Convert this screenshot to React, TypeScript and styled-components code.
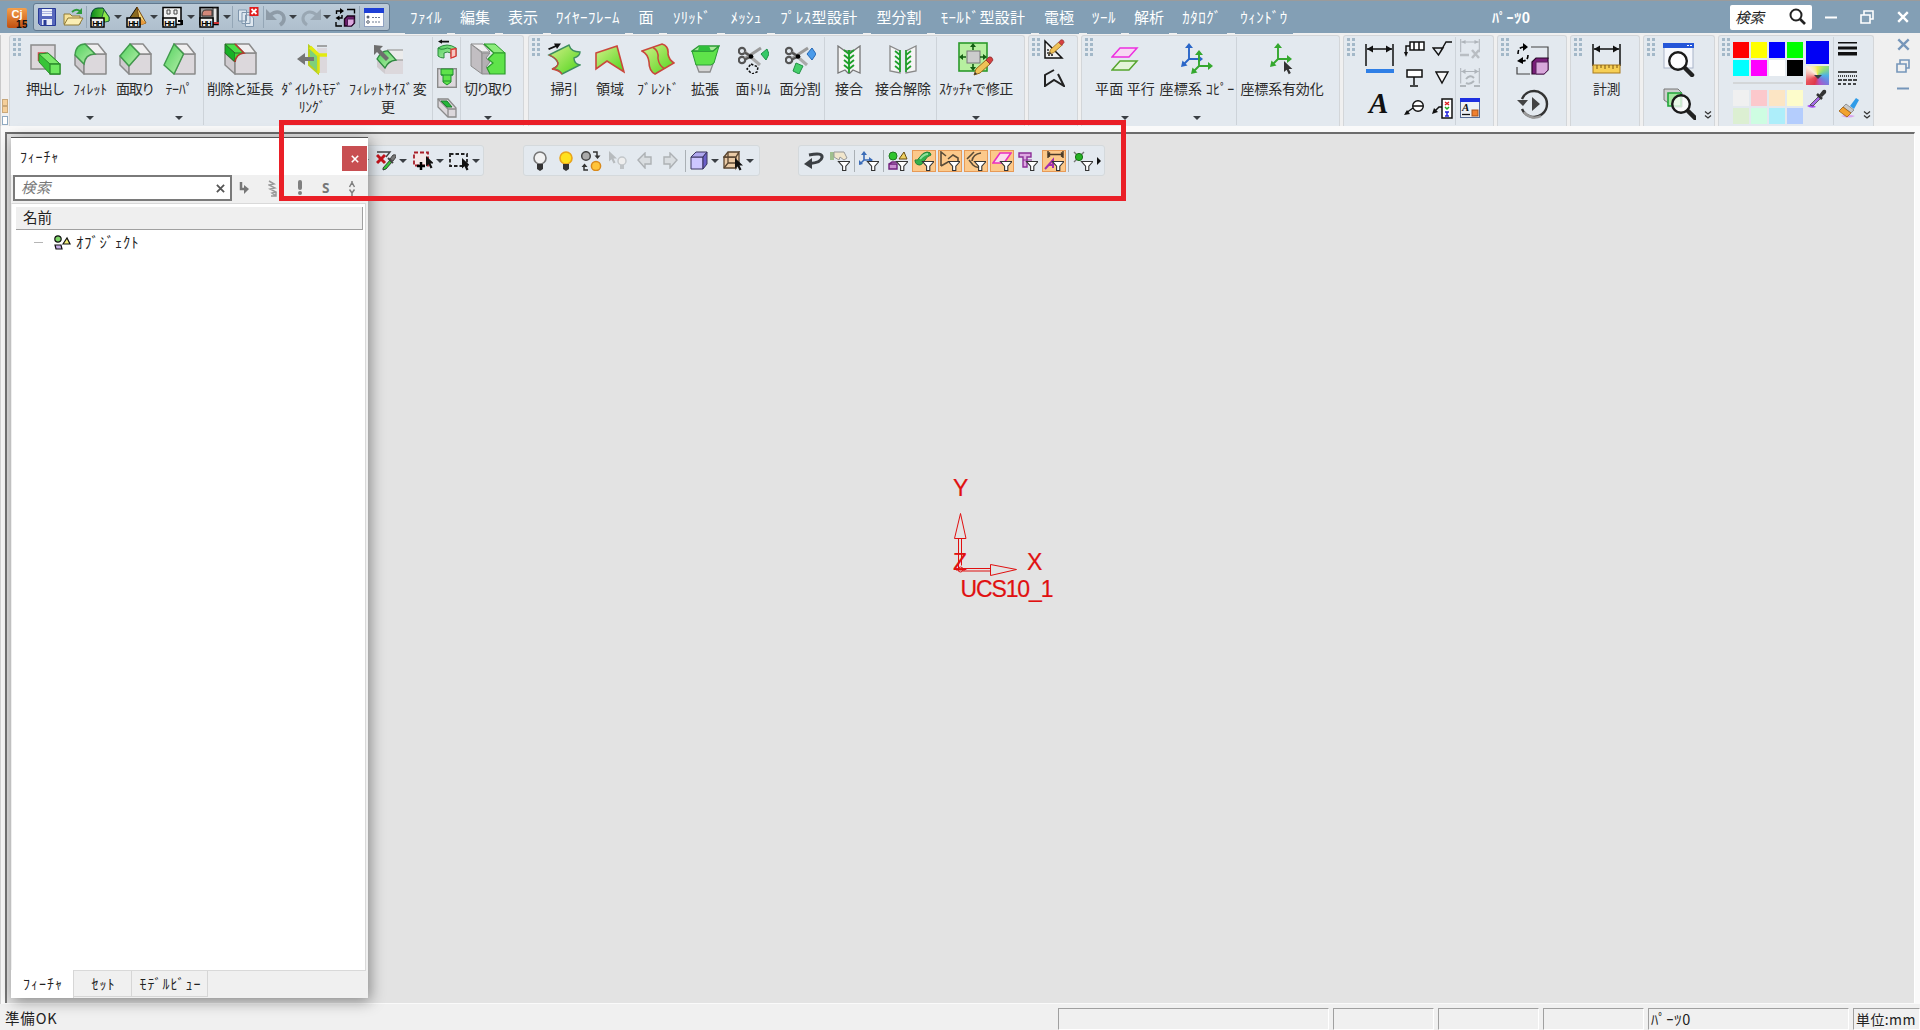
import React from "react";
import styled, { createGlobalStyle, css } from "styled-components";

const JP = `"Noto Sans CJK JP", "Noto Sans", sans-serif`;

const GlobalStyle = createGlobalStyle`
  html, body { margin: 0; padding: 0; overflow: hidden; }
  body { font-family: ${JP}; color: #222; background: #f0f0f0; }
  * { box-sizing: border-box; }
  svg { display: block; flex: none; }
`;

/* ---------- text fitted to the narrow UI font ---------- */

const advance = (ch: string) => {
  const c = ch.charCodeAt(0);
  if (c === 32) return 0.22;
  if (c < 128) return 0.57;
  if (c >= 0xff61 && c <= 0xff9f) return 0.5;
  return 1;
};

const tracking = (text: string, size: number, width: number) => {
  const chars = [...text];
  const natural = chars.reduce((sum, ch) => sum + advance(ch) * size, 0);
  return (width - natural) / chars.length;
};

const Fitted = styled.span<{ $size: number; $track: number; $italic?: boolean; $bold?: boolean }>`
  font-size: ${(p) => p.$size}px;
  letter-spacing: ${(p) => p.$track.toFixed(2)}px;
  font-style: ${(p) => (p.$italic ? "italic" : "normal")};
  font-weight: ${(p) => (p.$bold ? 700 : 400)};
  white-space: pre;
`;

type TextProps = { t: string; w: number; size?: number; italic?: boolean; bold?: boolean };
const Text = ({ t, w, size = 14, italic, bold }: TextProps) => (
  <Fitted $size={size} $track={tracking(t, size, w)} $italic={italic} $bold={bold}>
    {t}
  </Fitted>
);

/* ---------- icons ---------- */

const GREEN = "#5fe34a";
const GREY = "#dcd8dc";
const LINE = "#8b8b8b";

const HiddenSvg = styled.svg`
  position: absolute;
`;
const Defs = () => (
  <HiddenSvg width="0" height="0">
    <defs>
      <linearGradient id="lime" x1="0" y1="0" x2="1" y2="1">
        <stop offset="0" stopColor="#d6f08a" />
        <stop offset="1" stopColor="#4fd51c" />
      </linearGradient>
      <linearGradient id="mint" x1="0" y1="0" x2="1" y2="1">
        <stop offset="0" stopColor="#4fd05c" />
        <stop offset="1" stopColor="#b9efac" />
      </linearGradient>
      <linearGradient id="logo" x1="0" y1="0" x2="0" y2="1">
        <stop offset="0" stopColor="#f5a04c" />
        <stop offset="1" stopColor="#c04f10" />
      </linearGradient>
      <linearGradient id="cone" x1="0" y1="0" x2="1" y2="0">
        <stop offset="0" stopColor="#0c8a1c" />
        <stop offset="1" stopColor="#7be03c" />
      </linearGradient>
    </defs>
  </HiddenSvg>
);

const Funnel = () => (
  <path d="M8.5 10.5h11.5l-4.2 4.6v4.4h-3.2v-4.4z" fill="#fff" stroke="#333" strokeWidth="1.1" />
);
const Cursor = ({ x, y, fill = "#111" }: { x: number; y: number; fill?: string }) => (
  <path transform={`translate(${x} ${y})`} d="M0 0v10.5l2.5-2.2 2 4.2 2-1-2-4h3.5z" fill={fill} />
);
const Hex = () => (
  <g>
    <rect x="1" y="12" width="13" height="9" fill="#eee" stroke="#000" strokeWidth="1.5" />
    <text x="2.2" y="19.7" fontFamily="Liberation Sans" fontWeight="700" fontSize="8" textLength="10.5" fill="#000">
      HH
    </text>
  </g>
);
/* A block seen from the upper left; `left` and `front` are cut by the coloured face. */
const Solid = ({ left, front, top = "M11 1h13l8 10H21z" }: { left?: string; front: string; top?: string }) => (
  <g fill={GREY} stroke={LINE} strokeWidth="1.5" strokeLinejoin="round">
    {left && <path d={left} fill="#cfcbcf" />}
    <path d={front} />
    <path d={top} fill="#f0eff0" />
  </g>
);
const Dim = ({ c = "#111" }: { c?: string }) => (
  <g stroke={c} strokeWidth="1.5" fill={c}>
    <path d="M1 0v22M28 0v22M2 5h25" fill="none" />
    <path d="M2 5l6-3.5v7zM27 5l-6-3.5v7z" stroke="none" />
  </g>
);
const Axes = ({ x, y, c }: { x: number; y: number; c: string }) => (
  <g transform={`translate(${x} ${y})`} stroke={c} fill={c} strokeWidth="1.9">
    <path d="M8 3v12h9M8 15l-5 5" fill="none" />
    <path d="M8-1l4 5h-8zM22 15l-5 4v-8zM0 23l1.5-6.5 5 5z" stroke="none" />
  </g>
);
const Scissors = () => (
  <g fill="none" stroke="#555" strokeWidth="2.2">
    <circle cx="4" cy="7" r="3.2" />
    <circle cx="4" cy="16" r="3.2" />
    <path d="M7 14.5L23 4" stroke="#999" strokeWidth="3" />
    <path d="M7 8l15 13" stroke="#aaa" strokeWidth="3" />
    <path d="M6.5 8.5l7 4-6.5 3" />
    <circle cx="13" cy="12.5" r="1.2" fill="#000" stroke="#000" />
  </g>
);
const Lens = ({ x, y }: { x: number; y: number }) => (
  <g transform={`translate(${x} ${y})`}>
    <path d="M17 17l7 7" stroke="#222" strokeWidth="4.5" strokeLinecap="round" />
    <circle cx="10" cy="10" r="8.8" fill="#fff" fillOpacity="0.75" stroke="#1a1a1a" strokeWidth="2.4" />
  </g>
);
const Cycle = () => (
  <g fill="none" stroke="#000" strokeWidth="1.6">
    <path d="M2 12c0-5 2-7 7-7M12 13c0 4-2 6-6 6" strokeDasharray="4 2" />
    <path d="M7 1l5 4-5 4zM7 15v7l-6-3z" fill="#000" stroke="none" />
    <path d="M15 5h17v12M1 25v7h13" stroke="#444" strokeWidth="1.2" />
    <path d="M16 20l4-4h12v12l-4 4h-12z" fill="#7a1f7a" stroke="#2a0a2a" strokeWidth="1.2" />
    <path d="M20 20h12v8l-4 4h-8z" fill="#d9a8dc" stroke="#5a245e" strokeWidth="1" />
  </g>
);
const Pencil = ({ x, y, s = 1 }: { x: number; y: number; s?: number }) => (
  <g transform={`translate(${x} ${y}) scale(${s})`}>
    <path d="M0 19l2-6 10-9 4 4-10 9z" fill="#f0c257" stroke="#9a6c1c" strokeWidth="1" />
    <path d="M12 4l3-3q3-1 4 3l-3 4z" fill="#d84040" stroke="#8b3030" strokeWidth="0.8" />
    <path d="M0 19l1-3 2 2z" fill="#333" />
  </g>
);

type Glyph = { w: number; h: number; art: React.ReactNode };

const glyphs: Record<string, Glyph> = {
  logo: { w: 21, h: 21, art: (
    <g>
      <rect x="0" y="0" width="20" height="20" rx="2" fill="url(#logo)" />
      <text x="4.5" y="10" fontFamily="Liberation Sans" fontWeight="700" fontSize="11" fill="#fff">Cj</text>
      <text x="9" y="19.5" fontFamily="Liberation Sans" fontWeight="700" fontSize="10" textLength="11.500" fill="#111">15</text>
    </g>
  ) },
  save: { w: 18, h: 18, art: (
    <g>
      <path d="M.5 .5h17v17h-15l-2-2z" fill="#5868bd" stroke="#283a96" />
      <rect x="4" y="1" width="10" height="7" fill="#eef1fb" />
      <path d="M4 3.5h10M4 5.5h10" stroke="#9aa5d8" strokeWidth=".8" />
      <rect x="4" y="11" width="10" height="6" fill="#e7ebf8" />
      <rect x="5.5" y="12" width="3" height="5" fill="#283a96" />
    </g>
  ) },
  open: { w: 21, h: 18, art: (
    <g>
      <path d="M1 16V6h6l2 2h8v8z" fill="#f6e29a" stroke="#8f7a36" />
      <path d="M1 17l4-7h15l-4 7z" fill="#fbeeb4" stroke="#8f7a36" />
      <path d="M9 4q4-4 8-1" fill="none" stroke="#2c9a3a" strokeWidth="1.8" />
      <path d="M19 0v6h-6z" fill="#2c9a3a" />
    </g>
  ) },
  hexGreen: { w: 21, h: 22, art: (
    <g>
      <path d="M1 10q1-8 7-8h5l6 9v4h-18z" fill="url(#cone)" stroke="#043" strokeWidth="1" />
      <path d="M12 11l2-7 5 7v4q-4 2-7 0z" fill="#8fe84a" stroke="#264" strokeWidth="1" />
      <Hex />
    </g>
  ) },
  hexYellow: { w: 21, h: 22, art: (
    <g>
      <path d="M3 13l8-12 3 12z" fill="#8a6a20" stroke="#000" strokeWidth=".9" />
      <path d="M11 1l9 16-6 2z" fill="#f5d878" stroke="#7c4b10" strokeWidth="1" />
      <path d="M14 12l6 5-5 2z" fill="#e79a3c" />
      <Hex />
    </g>
  ) },
  hexBoard: { w: 21, h: 22, art: (
    <g>
      <path d="M1 1.5h18v17h-18z" fill="#f1f1f1" stroke="#000" strokeWidth="1.5" />
      <path d="M5 4h3v4h-3zM12 4h3v4h-3z" fill="none" stroke="#444" />
      <path d="M16 15h4v4" fill="none" stroke="#000" strokeWidth="2" />
      <Hex />
    </g>
  ) },
  hexRed: { w: 21, h: 22, art: (
    <g>
      <path d="M1 1.5h18v17h-18z" fill="#a0a0a0" stroke="#000" strokeWidth="1.5" />
      <path d="M3 9q0-5 4-5h6v6h-10z" fill="#d4887a" stroke="#333" />
      <path d="M14 2h4v15h-4z" fill="#e5e5e5" stroke="#222" />
      <path d="M13 17h7" stroke="#c33" strokeWidth="2" />
      <Hex />
    </g>
  ) },
  copyX: { w: 21, h: 20, art: (
    <g stroke="#7f96ad" fill="#dfe8f0">
      <path d="M.5 3h8v11h-8zM4 5.500h8v11h-8zM7.500 8h5l3 3v8.500h-8z" />
      <rect x="11.500" y="0" width="9" height="9" fill="#e11b1b" stroke="none" />
      <path d="M13.500 2l5 5M18.500 2l-5 5" stroke="#fff" strokeWidth="1.800" />
    </g>
  ) },
  undo: { w: 21, h: 20, art: (
    <g><path d="M4 8q8-6 13 0 3 6-3 10" fill="none" stroke="#8e9ba7" strokeWidth="3.500" /><path d="M0 2v11h11z" fill="#8e9ba7" /></g>
  ) },
  redo: { w: 21, h: 20, art: (
    <g><path d="M17 8q-8-6-13 0-3 6 3 10" fill="none" stroke="#99a7b3" strokeWidth="3" /><path d="M21 2v11h-11z" fill="#99a7b3" /></g>
  ) },
  cycleSmall: { w: 21, h: 20, art: (
    <g fill="none" stroke="#000" strokeWidth="1.400">
      <path d="M1.500 7v-3h4M7 8v3h-3M12 2.500h7.500v4M1 15v4h6" />
      <path d="M5 1l4 3-4 3zM4.500 8.500v5l-4-2.500z" fill="#000" stroke="none" />
      <path d="M9.500 12l3-3h7v7l-3 3h-7z" fill="#6d1d6d" stroke="#1c061c" />
      <path d="M12.500 12h6.500v4l-3 3h-3.500z" fill="#dba8de" stroke="#4a1a4e" strokeWidth="1" />
    </g>
  ) },
  formWin: { w: 21, h: 19, art: (
    <g>
      <rect x=".500" y=".500" width="19" height="18" fill="#fff" stroke="#8fa1c0" />
      <rect x="0" y="0" width="20" height="5" fill="#1d3fd6" />
      <path d="M8 9.500h9M8 14h9" stroke="#6d7a90" strokeDasharray="2 1" />
      <circle cx="4" cy="9" r="1.500" fill="#5a6474" /><circle cx="4" cy="14" r="1.300" fill="none" stroke="#5a6474" />
    </g>
  ) },

  extrude: { w: 31, h: 31, art: (
    <g>
      <rect x="1" y="1" width="24" height="24" fill={GREY} stroke={LINE} strokeWidth="1.500" />
      <path d="M8.500 17v-8h8" fill="none" stroke="#d04545" strokeWidth="1.500" />
      <path d="M9 10l9-1 12 11v10h-10l-11-12z" fill="#37c437" stroke="#2d8d2d" />
      <path d="M9 10l9-1 12 11h-10z" fill="#7be96a" stroke="#2d8d2d" />
      <path d="M20 20h10v10h-10z" fill="#6fe860" stroke="#2d8d2d" strokeWidth="1.300" />
    </g>
  ) },
  fillet: { w: 33, h: 32, art: (
    <g>
      <Solid left="M1 12v10l9 9v-10z" front="M10 31v-9Q11 11 21 11h11v20z" />
      <path d="M1 12Q2 1 11 1l10 10Q11 11 10 21z" fill="url(#mint)" stroke="#3f9a4b" strokeWidth="1.400" />
    </g>
  ) },
  chamfer: { w: 33, h: 32, art: (
    <g>
      <Solid left="M1 13v9l9 9v-8z" front="M10 31v-8L20.500 11H32v20z" />
      <path d="M1 13L11 1l9.500 10L10 23z" fill="url(#mint)" stroke="#3f9a4b" strokeWidth="1.400" />
    </g>
  ) },
  draft: { w: 33, h: 32, art: (
    <g>
      <Solid front="M11 31l9.500-20H32v20z" />
      <path d="M11 1l9.500 10L11 31 1 22z" fill="url(#mint)" stroke="#3f9a4b" strokeWidth="1.400" />
    </g>
  ) },
  removeExtend: { w: 33, h: 32, art: (
    <g>
      <Solid left="M1 10v12l10 9V19z" front="M11 31V19q0-8 9-9h12v21z" top="M11 1h14l7 9H20z" />
      <path d="M1 1l10 9v9L1 10z" fill="#17b026" stroke="#286b28" />
      <path d="M11 10h9q-8 1-9 9z" fill="#3fdc3a" />
      <path d="M1 1h10l9 9h-9z" fill="#4ce04a" stroke="#286b28" />
      <path d="M11 1l9 9q-8 1-9 9" fill="none" stroke="#b03a2e" strokeWidth="1.700" />
    </g>
  ) },
  direct: { w: 31, h: 31, art: (
    <g>
      <path d="M20 4h10v25h-8z" fill={GREY} />
      <path d="M20 2h10" stroke={LINE} strokeWidth="1.500" />
      <path d="M12 2l9 8v19l-9-8z" fill="#7ed07a" stroke="#b9cf20" strokeWidth="2" />
      <path d="M13 3l8.500 8H30" fill="none" stroke="#e2ea10" strokeWidth="3.500" />
      <path d="M21.500 11v18" stroke="#d8e410" strokeWidth="2.500" />
      <path d="M0 15l8-6v4h9v4h-9v4z" fill="#757575" />
    </g>
  ) },
  filletSize: { w: 31, h: 31, art: (
    <g>
      <path d="M14 6h16v10l-12 2z" fill="#ececec" />
      <path d="M4 16v7l8 7V20z" fill="#cfcbcf" />
      <path d="M12 30v-6q3-9 10-8h8v14z" fill={GREY} />
      <path d="M14 6h16M22 16h8" stroke="#aaa" strokeWidth="1.400" />
      <path d="M4 15q5-9 11-8l8 9q-8 1-11 8z" fill="url(#mint)" stroke="#2e8740" strokeWidth="1.300" />
      <path d="M1 1l9 1-3 3 9 9-3 3-9-9-3 3z" fill="#6e6e6e" />
    </g>
  ) },
  cylCut: { w: 20, h: 21, art: (
    <g>
      <path d="M1 2.500l4-2v1.300h7v1.600h-7v1.300z" fill="#111" />
      <path d="M1 9q9-6 18 0v8q-3 2-5 1v-4q-4-2-7 0v5q-4 0-6-2z" fill="url(#mint)" stroke="#2b8a3d" />
      <path d="M1 9q3 2 6 1 3-2 7 0" fill="none" stroke="#2b8a3d" />
      <path d="M14 10.500l5-1v7.500l-5 2z" fill="#f5c7c0" stroke="#d33" strokeWidth="1.300" />
    </g>
  ) },
  holeCut: { w: 20, h: 20, art: (
    <g>
      <rect x=".7" y=".7" width="18.600" height="18.600" fill={GREY} stroke={LINE} strokeWidth="1.400" />
      <path d="M4 1h12v6h-2v7l-4 3-4-3v-7h-2z" fill={GREEN} stroke="#1e8e2e" />
      <path d="M4 7h12M6 13h8" stroke="#1e8e2e" />
    </g>
  ) },
  pocket: { w: 20, h: 20, art: (
    <g>
      <path d="M1 1h10l8 9v9h-8l-10-10z" fill={GREY} stroke={LINE} strokeWidth="1.300" />
      <path d="M1 1l10 10h8M11 11v8" fill="none" stroke={LINE} strokeWidth="1.300" />
      <path d="M4 3h6l5 6h-5z" fill="#25b63a" stroke="#1e7e2e" />
    </g>
  ) },
  cutOff: { w: 36, h: 32, art: (
    <g>
      <path d="M1 1l11 9v21L1 23z" fill="#c2bec2" stroke={LINE} />
      <path d="M1 1h12l7 8h-8z" fill="#f0eff0" stroke={LINE} />
      <path d="M12 10h8l-4 5 4 4-4 5 4 3v4h-8z" fill="#b3afb3" stroke={LINE} />
      <path d="M14 1h11l10 9H24z" fill="#8cec7c" stroke="#2b9a2b" />
      <path d="M14 1l10 9-6 6 5 4-6 5 3 6h15V10H24" fill={GREEN} stroke="#2b9a2b" strokeWidth="1.200" />
    </g>
  ) },
  sweep: { w: 34, h: 34, art: (
    <g>
      <path d="M2 13L22 3q2 7 11 7 0 4-6 6 0 6 6 7L15 32q-3-5-10-5 6-2 6-6-2-5-9-8z" fill="url(#lime)" stroke="#3f8f60" strokeWidth="1.400" />
      <path d="M2 13q8 3 9 8 0 4-6 6 7 1 10 5" fill="none" stroke="#c94a3e" strokeWidth="1.300" />
      <path d="M1 6.500l7-3-1-2 7 0-4 5.500-1-2-7 3z" fill="#111" />
    </g>
  ) },
  region: { w: 30, h: 30, art: <path d="M1 9L22 2l7 26-17-11L1 25z" fill="url(#lime)" stroke="#c9483c" strokeWidth="1.600" /> },
  blend: { w: 34, h: 32, art: (
    <g>
      <path d="M1 8L21 1q7 2 6 10 1 6 6 9L14 31Q8 28 8 19 7 11 1 8z" fill="url(#lime)" stroke="#c9483c" strokeWidth="1.600" />
      <path d="M12 4.500q6 3 5 11 1 7 6 10" fill="none" stroke="#c9483c" strokeWidth="1.500" />
    </g>
  ) },
  expand: { w: 29, h: 28, art: (
    <g>
      <path d="M5 19h17l-3 8h-11z" fill="#d5d5d5" stroke={LINE} strokeWidth="1.300" />
      <path d="M1 6h21l6-5-5 17-3 2h-15z" fill={GREEN} stroke="#2a9a35" />
      <path d="M1 6l7-5h20l-6 5z" fill="#a9e89a" stroke="#2a9a35" strokeWidth="1.300" />
      <path d="M8 1l-1 5h13l-2-5" fill="#2fbf3a" />
    </g>
  ) },
  faceTrim: { w: 31, h: 30, art: (
    <g>
      <Scissors />
      <path d="M23 10l6-5 2 5-3 6z" fill="#36c968" stroke="#1d9146" />
      <path d="M13 20l7 3-1 5-5 2-5-5z" fill="none" stroke="#111" strokeWidth="1.500" strokeDasharray="2.500 1.500" />
    </g>
  ) },
  faceSplit: { w: 31, h: 30, art: (
    <g>
      <Scissors />
      <path d="M22 10l5-6 4 6-4 6z" fill="#4a9bea" stroke="#2668b4" />
      <path d="M11 19l7 3-4 8-6-3z" fill="#45cf6a" stroke="#229144" />
    </g>
  ) },
  join: { w: 24, h: 29, art: (
    <g>
      <path d="M1 1l7 5h8l7-5v27l-7-3-4 4-4-4-7 3z" fill="#f4f4f4" stroke="#777" strokeWidth="1.300" />
      <g stroke="#1fa02a" strokeWidth="1.900" fill="none">
        <path d="M12 5v23M7 5l5 4 5-4M7 10l5 4 5-4M7 15l5 4 5-4M7 20l5 4 5-4" />
      </g>
    </g>
  ) },
  unjoin: { w: 28, h: 29, art: (
    <g>
      <path d="M1 1l10 5v22l-10-2zM27 1l-10 5v22l10-2z" fill="#f4f4f4" stroke="#888" strokeWidth="1.300" />
      <g stroke="#1fa02a" strokeWidth="1.700" fill="none">
        <path d="M11 5v22M17 5v22M6 6l5 4M6 11l5 4M6 16l5 4M6 21l5 4M22 6l-5 4M22 11l-5 4M22 16l-5 4M22 21l-5 4" />
      </g>
    </g>
  ) },
  sketchFix: { w: 36, h: 34, art: (
    <g>
      <rect x="1" y="1" width="28" height="28" fill="#b7efa0" stroke="#2b9a2b" strokeWidth="1.600" />
      <rect x="9" y="9" width="13" height="12" fill="#ccc" stroke="#777" />
      <path d="M15 1l3 4h-6zM15 29l3-4h-6zM1 15l4-3v6zM29 15l-4-3v6z" fill="#145e14" />
      <path d="M15 4v4M15 22v4M4 15h4M22 15h4" stroke="#145e14" strokeWidth="1.600" />
      <Pencil x={16} y={14} />
    </g>
  ) },
  sketch: { w: 21, h: 21, art: (
    <g>
      <path d="M1 2v17h17z" fill="#f0f0f0" stroke="#111" strokeWidth="1.500" />
      <path d="M4 10v6h6" fill="none" stroke="#111" strokeWidth="1.300" strokeDasharray="2 1" />
      <Pencil x={5} y={0} s={0.8} />
    </g>
  ) },
  profile: { w: 21, h: 18, art: <path d="M10 1L1 6v11l9-6 10 6-6-12" fill="none" stroke="#222" strokeWidth="2" /> },
  plane: { w: 28, h: 26, art: (
    <g strokeWidth="1.500">
      <path d="M9 2h17l-8 9h-17z" fill="#f7d8f3" stroke="#ec2fe0" />
      <path d="M9 15h17l-8 9h-17z" fill="#e4f5da" stroke="#56a52e" />
    </g>
  ) },
  ucsCopy: { w: 33, h: 32, art: <g><Axes x={0} y={1} c="#2a66c8" /><Axes x={10} y={8} c="#35a82e" /></g> },
  ucsActive: { w: 24, h: 32, art: <g><Axes x={0} y={1} c="#35a82e" /><g transform="translate(14 18) scale(1.050)"><Cursor x={0} y={0} fill="#333" /></g></g> },

  dimension: { w: 29, h: 30, art: <g><Dim /><rect x="1" y="25" width="28" height="4" fill="#2f7fe6" /></g> },
  textA: { w: 30, h: 28, art: <text x="5" y="24" fontFamily="Liberation Serif" fontStyle="italic" fontWeight="700" fontSize="29" fill="#111">A</text> },
  note1: { w: 21, h: 16, art: (
    <g fill="none" stroke="#111" strokeWidth="1.500"><rect x="6" y="1" width="14" height="8" fill="#fff" /><path d="M10 1v8M15 1v8M6 5h-4v8" /><path d="M2 16l-2-5h4z" fill="#111" stroke="none" /></g>
  ) },
  note2: { w: 17, h: 18, art: (
    <g fill="#fff" stroke="#111" strokeWidth="1.500"><rect x="1" y="1" width="15" height="7" /><path d="M8 8v8M4 17h8" /></g>
  ) },
  note3: { w: 21, h: 16, art: (
    <g fill="#fff" stroke="#111" strokeWidth="1.400"><circle cx="14" cy="6" r="5.300" /><path d="M9 6h10M9 8l-7 5" /><path d="M0 15l3-5 3 4z" fill="#111" stroke="none" /></g>
  ) },
  rough1: { w: 20, h: 16, art: <path d="M1 7h10l-4.500 7zM6.500 14L14 1h6" fill="none" stroke="#111" strokeWidth="1.400" /> },
  rough2: { w: 15, h: 14, art: <path d="M1 1h12l-6 11z" fill="#f6f6f6" stroke="#111" strokeWidth="1.400" /> },
  tolBox: { w: 21, h: 21, art: (
    <g fill="none" stroke="#111" strokeWidth="1.500">
      <rect x="10" y="1" width="10" height="19" fill="#fff" />
      <path d="M13 4l4 3M17 4l-4 3" stroke="#d22" /><path d="M13 9l2 2 2-2" stroke="#2a2" /><path d="M13 14h4M15 14v4M13 18h4" stroke="#22d" />
      <path d="M10 9h-3l-4 4" /><path d="M0 16l2-6 4 4z" fill="#111" stroke="none" />
    </g>
  ) },
  dimDel: { w: 21, h: 21, art: <g><g transform="scale(.690 .600)"><Dim c="#aeb4ba" /></g><path d="M0 16h9M12 11l7 8M19 11l-7 8" stroke="#b9bec3" strokeWidth="2.500" /></g> },
  dimRot: { w: 21, h: 21, art: <g><g transform="scale(.690 .700)"><Dim c="#aeb4ba" /></g><path d="M6 11q4-5 8-1M14 13q-4 4-8 2M0 18h6M14 18h6" stroke="#b0b6bb" strokeWidth="2" fill="none" /></g> },
  textWin: { w: 21, h: 20, art: (
    <g>
      <rect x=".500" y=".500" width="19" height="19" fill="#eef1f6" stroke="#566c96" />
      <rect x="0" y="0" width="20" height="4" fill="#1d2fe0" />
      <text x="2" y="13" fontFamily="Liberation Serif" fontStyle="italic" fontWeight="700" fontSize="11" fill="#111">A</text>
      <path d="M2 16.500h8" stroke="#111" strokeWidth="1.300" />
      <rect x="12" y="12" width="6" height="6" fill="#f08030" stroke="#a4521a" />
    </g>
  ) },
  cycle: { w: 34, h: 34, art: <Cycle /> },
  history: { w: 33, h: 31, art: (
    <g>
      <path d="M5 11A13 13 0 1 1 5 21" fill="none" stroke="#333" strokeWidth="2.400" />
      <path d="M7 24A13 13 0 0 0 24 28" fill="none" stroke="#999" strokeWidth="2.400" />
      <path d="M0 12h11l-5 6zM15 9l8 7-8 7z" fill="#444" />
    </g>
  ) },
  measure: { w: 29, h: 30, art: (
    <g><Dim /><rect x="1" y="21" width="27" height="8" fill="#f6cf55" stroke="#a87a1e" /><path d="M5 21v4M9 21v3M13 21v4M17 21v3M21 21v4M25 21v3" stroke="#7a5510" /></g>
  ) },
  zoomWin: { w: 32, h: 34, art: (
    <g><rect x="1" y="1" width="29" height="24" fill="#f6f8fd" stroke="#a9b4c8" /><rect x="0" y="0" width="31" height="5" fill="#2556d8" /><path d="M24 2.500h2M27 2.500h2" stroke="#fff" /><Lens x={5} y={8} /></g>
  ) },
  zoomPart: { w: 33, h: 32, art: (
    <g>
      <path d="M1 1h14l4 4v14h-8l-10-7z" fill="#cfcfcf" stroke="#777" />
      <path d="M5 5h13v13h-13z" fill="#a5e8a0" stroke="#21a53a" strokeWidth="1.600" />
      <Lens x={8} y={6} />
    </g>
  ) },
  dropper: { w: 22, h: 20, art: (
    <g>
      <path d="M1 17q5-3 9 1-5 2-9-1z" fill="#a34df0" />
      <path d="M4 16l9-9 2 2-8 8z" fill="#a66be8" stroke="#444" strokeWidth=".8" /><path d="M11 5l5 5" stroke="#333" strokeWidth="2.500" /><path d="M13 6l4-5q4-1 3 3l-4 4z" fill="#333" />
    </g>
  ) },
  thickness: { w: 20, h: 14, art: <g fill="#111"><rect y="0" width="19" height="1.500" /><rect y="4.500" width="19" height="3" /><rect y="10" width="19" height="3.500" /></g> },
  dashes: { w: 20, h: 15, art: (
    <g stroke="#111" strokeWidth="1.500"><path d="M0 1h19" /><path d="M0 5h19" strokeDasharray="1 1" /><path d="M0 9h19" strokeDasharray="4 1" /><path d="M0 13h19" strokeDasharray="3 2" /></g>
  ) },
  brush: { w: 21, h: 20, art: (
    <g>
      <path d="M3 18q6-3 14 0-6 3-14 0z" fill="#d9a6ee" />
      <path d="M12 8l6-8 3 2-5 9z" fill="#2f9be8" />
      <path d="M8 6l8 6-3 3-8-6z" fill="#c9c9c9" stroke="#777" strokeWidth=".700" />
      <path d="M5 9l8 6-4 4-8-6z" fill="#f2a22e" stroke="#9c5c12" strokeWidth=".800" />
    </g>
  ) },

  pickFilter: { w: 20, h: 20, art: (
    <g><path d="M1 1h13l-4 5" fill="none" stroke="#444" strokeWidth="1.400" /><path d="M1 4l8 8M9 4l-8 8" stroke="#c4141c" strokeWidth="3" /><path d="M7 17l7-8 2 2-6 7-3 1z" fill="#3ac83a" stroke="#222" strokeWidth=".8" /><path d="M12 7l5 5" stroke="#444" strokeWidth="2" /><path d="M14 8l3-4q4-1 3 2l-3 4z" fill="#777" stroke="#444" /></g>
  ) },
  addSelect: { w: 20, h: 20, art: (
    <g><rect x="1" y="1.500" width="14" height="13" fill="#f5e8e8" stroke="#a81e28" strokeWidth="1.800" strokeDasharray="4 2" /><path d="M8 11v8M4 15h8" stroke="#000" strokeWidth="2.500" /><Cursor x={13} y={5} /></g>
  ) },
  boxSelect: { w: 20, h: 20, art: <g><rect x="1" y="3" width="17" height="12" fill="none" stroke="#222" strokeWidth="1.800" strokeDasharray="3.500 2" /><Cursor x={13} y={7} /></g> },
  bulbOff: { w: 14, h: 20, art: <g><circle cx="7" cy="7" r="6" fill="#f2f2f2" stroke="#777" strokeWidth="1.600" /><path d="M4 13h6v5l-3 2-3-2z" fill="#333" /></g> },
  bulbOn: { w: 14, h: 20, art: <g><circle cx="7" cy="7" r="6" fill="#ffe11e" stroke="#e9a41c" strokeWidth="1.600" /><path d="M4 13h6v5l-3 2-3-2z" fill="#333" /></g> },
  swap: { w: 21, h: 20, art: (
    <g><circle cx="5" cy="5" r="4.300" fill="#aaa" stroke="#444" strokeWidth="1.500" /><circle cx="15" cy="15" r="4.600" fill="#ffc43a" stroke="#d98a1c" strokeWidth="1.500" /><path d="M12 1h4v4M7 19h-4v-4" fill="none" stroke="#333" strokeWidth="1.500" /><path d="M13.500 4.500h6l-3 3.500zM.5 16h6l-3-3.500z" fill="#333" /></g>
  ) },
  ghostBulb: { w: 19, h: 19, art: <g><Cursor x={0} y={0} fill="#b7bbbe" /><circle cx="13" cy="10" r="4" fill="#eee" stroke="#c3c7ca" strokeWidth="1.500" /><path d="M11 14h4v4h-4z" fill="#bfc3c6" /></g> },
  left: { w: 15, h: 17, art: <path d="M1 8l7-7v4h6v7h-6v4z" fill="#d9dde0" stroke="#adb1b4" strokeWidth="1.400" /> },
  right: { w: 15, h: 17, art: <path d="M14 8l-7-7v4h-6v7h6v4z" fill="#d9dde0" stroke="#adb1b4" strokeWidth="1.400" /> },
  cube: { w: 18, h: 19, art: (
    <g stroke="#3a3560" strokeWidth="1"><path d="M1 6h12v12h-12z" fill="#cdc6ff" /><path d="M1 6l5-5h11l-4 5z" fill="#b0a8ee" /><path d="M17 1v12l-4 5v-12z" fill="#6a5fc8" /></g>
  ) },
  wireCube: { w: 20, h: 20, art: (
    <g><g stroke="#5a4630" strokeWidth="1.300" fill="#eacba6"><path d="M1 6h12v11h-12z" /><path d="M1 6l4-5h11l-3 5zM16 1v11l-3 5v-11z" /><path d="M5 1v11h11M5 12l-4 5" fill="none" /></g><Cursor x={12} y={7} /></g>
  ) },
  loop: { w: 20, h: 17, art: <g><path d="M5 3q14-3 13 2.500-1 5-12 6" fill="none" stroke="#3c4044" strokeWidth="3" /><path d="M0 12l8-6v11z" fill="#3c4044" /></g> },
  fHand: { w: 20, h: 20, art: <g><path d="M0 1h4v8h-4z" fill="#9fc08e" /><path d="M4 1h10l3 6-3 2-4-3-1 3-5-3z" fill="#f1e6cc" stroke="#999" /><Funnel /></g> },
  fAxes: { w: 20, h: 20, art: <g><path d="M5 2v7h8M5 9l-4 4" fill="none" stroke="#3a6cb8" strokeWidth="1.600" /><path d="M5 0l3 4h-6zM14 9l-4 3v-6zM0 14v-5l4 4z" fill="#3a6cb8" /><Funnel /></g> },
  fObjects: { w: 20, h: 20, art: <g><circle cx="5" cy="5" r="4" fill="#2fc42f" stroke="#217a21" /><path d="M11 8l5-7 3 7z" fill="#efd060" stroke="#664c10" /><path d="M1 13h8v5h-8zM1 13l3-2h6" fill="#c98fd0" stroke="#701f7c" strokeWidth="1.400" /><Funnel /></g> },
  fFace: { w: 20, h: 20, art: <g><path d="M1 9q3 1 4-2 4-6 8-6 4 0 4 3-4 1-6 5-3 5-5 5-5 0-5-5z" fill="#33b04a" stroke="#1e8036" /><path d="M6 8q4-5 8-5" fill="none" stroke="#8fe09a" strokeWidth="2" /><Funnel /></g> },
  fProfile: { w: 20, h: 20, art: <g><path d="M1 15V1l5 4M1 15l7-4M8 8l5-4 5 3v3" fill="none" stroke="#5a4c38" strokeWidth="1.600" /><Funnel /></g> },
  fCurve: { w: 20, h: 20, art: <g><path d="M1 8L8 1M3 9l4 5q3 3 6 2M15 2Q7 3 6 10" fill="none" stroke="#5a4c38" strokeWidth="1.600" /><Funnel /></g> },
  fPlane: { w: 20, h: 20, art: <g><path d="M8 2h11l-7 10h-11z" fill="#fbdcec" stroke="#ea2fc0" strokeWidth="1.600" /><Funnel /></g> },
  fPart: { w: 20, h: 20, art: <g><path d="M1 2h12v4h-4v10h-4v-10h-4z" fill="#dda8e2" stroke="#8c2f98" strokeWidth="1.400" /><path d="M5 9h9" stroke="#8c2f98" /><Funnel /></g> },
  fDim: { w: 20, h: 20, art: <g><path d="M4 0v7M19 0v7M4 3.500h15M6 1.500l-2 2 2 2M17 1.500l2 2-2 2" fill="none" stroke="#4a3a28" strokeWidth="1.400" /><path d="M1 18l8-9v8M4 14h5" fill="none" stroke="#a22fae" strokeWidth="2" /><Funnel /></g> },
  fPoint: { w: 20, h: 20, art: <g><path d="M1 1l3 3M11 1l-3 3M1 11l3-3" stroke="#777" strokeWidth="1.400" /><circle cx="6" cy="6" r="3.600" fill="#25b325" stroke="#157015" /><Funnel /></g> },

  pArrow: { w: 10, h: 12, art: <g><path d="M2 0v7h4" fill="none" stroke="#777" strokeWidth="2.500" /><path d="M5 3l5 4-5 5z" fill="#777" /></g> },
  pSpring: { w: 9, h: 17, art: <path d="M1 1l5 3-5 1 6 3-5 1 6 3-4 1 4 3M8 12v4h-5" fill="none" stroke="#999" strokeWidth="1.500" /> },
  pBang: { w: 6, h: 16, art: <g fill="#808080"><rect x="1" y="0" width="4" height="10" rx="2" /><circle cx="3" cy="13" r="2" /></g> },
  pS: { w: 10, h: 14, art: <text x="1" y="12" fontFamily="Open Sans" fontWeight="700" fontSize="13.500" fill="#777">S</text> },
  pSort: { w: 8, h: 17, art: <path d="M4 1v4M1.500 7L4 2.500 6.500 7M4 16v-3M1.500 9.500L4 13l2.500-3.500" fill="none" stroke="#808080" strokeWidth="1.500" /> },
  objects: { w: 17, h: 15, art: <g stroke="#111" strokeWidth="1.200"><circle cx="4" cy="4" r="3.200" fill="#7fd66a" /><path d="M9 9l4-6 3 6z" fill="#f4f07a" /><path d="M1 10h6l1 4h-6z" fill="#c7aee8" /></g> },
};

const Icon = ({ n }: { n: string }) => {
  const g = glyphs[n];
  return (
    <svg width={g.w} height={g.h} viewBox={`0 0 ${g.w} ${g.h}`}>
      {g.art}
    </svg>
  );
};

const Caret = styled.span<{ $side?: boolean }>`
  flex: none;
  width: 0;
  height: 0;
  border: 4px solid transparent;
  ${(p) =>
    p.$side
      ? css`border-left: 4px solid #111; border-right: 0;`
      : css`border-top: 4px solid #3a3f44; border-bottom: 0;`}
`;

/* ---------- title bar ---------- */

const Window = styled.div`
  width: 1920px;
  height: 1030px;
  display: flex;
  flex-direction: column;
  background: #f0f0f0;
  position: relative;
  overflow: hidden;
`;
const TitleBar = styled.header`
  flex: none;
  height: 33px;
  background: #839fb5;
  border-top: 1px solid #9b9b9b;
  display: flex;
  align-items: flex-start;
  padding-left: 7px;
`;
const LogoSlot = styled.div`
  width: 26px;
  padding-top: 7px;
`;
const QuickBar = styled.div`
  width: 357px;
  height: 28px;
  margin-top: 2px;
  border: 1px solid #62798f;
  border-radius: 3px;
  background: linear-gradient(#bccbd8, #afbfcd);
  display: flex;
  align-items: center;
`;
const QuickSlot = styled.div<{ $w: number }>`
  flex: none;
  width: ${(p) => p.$w}px;
  display: flex;
  justify-content: center;
`;
const QuickSep = styled.i`
  flex: none;
  width: 1px;
  height: 22px;
  background: #94a6b6;
`;
const Menu = styled.nav`
  display: flex;
  gap: 8px;
  margin-left: 15px;
`;
const MenuItem = styled.div<{ $w: number }>`
  width: ${(p) => p.$w}px;
  height: 33px;
  padding-bottom: 1px;
  background: #839fb5;
  color: #fff;
  display: flex;
  align-items: center;
  justify-content: center;
  line-height: 20px;
`;
const DocTitle = styled.div`
  width: 238px;
  margin-left: 199px;
  color: #fff;
  line-height: 31px;
`;
const SearchBox = styled.div`
  width: 82px;
  height: 25px;
  margin-top: 4px;
  padding: 0 6px 2px 5px;
  background: #fff;
  border-radius: 2px;
  display: flex;
  align-items: center;
  justify-content: space-between;
  line-height: 20px;
`;
const WindowButtons = styled.div`
  height: 32px;
  margin-left: 13px;
  display: flex;
  align-items: center;
  gap: 23px;
`;

const quick: Array<[string, number] | "|" | "v"> = [
  ["save", 26], ["open", 26], "|", ["hexGreen", 26], "v", ["hexYellow", 26], "v", ["hexBoard", 27], "v",
  ["hexRed", 26], "v", "|", ["copyX", 30], "|", ["undo", 24], "v", ["redo", 24], "v", ["cycleSmall", 27], "|", ["formWin", 29],
];

const menus: Array<[string, number, number]> = [
  ["ﾌｧｲﾙ", 42, 32], ["編集", 40, 30], ["表示", 40, 30], ["ﾜｲﾔｰﾌﾚｰﾑ", 74, 64], ["面", 26, 15], ["ｿﾘｯﾄﾞ", 50, 38],
  ["ﾒｯｼｭ", 42, 31], ["ﾌﾟﾚｽ型設計", 88, 78], ["型分割", 56, 45], ["ﾓｰﾙﾄﾞ型設計", 96, 85], ["電極", 40, 30],
  ["ﾂｰﾙ", 34, 24], ["解析", 40, 30], ["ｶﾀﾛｸﾞ", 50, 40], ["ｳｨﾝﾄﾞｳ", 58, 48],
];

const Restore = ({ c, bg }: { c: string; bg: string }) => (
  <svg width="14" height="14" viewBox="0 0 14 14" fill={bg} stroke={c} strokeWidth="1.600">
    <path d="M4 1h9v8h-9z" />
    <path d="M1 5h9v8h-9z" />
  </svg>
);
const Cross = ({ s, c, w = 2 }: { s: number; c: string; w?: number }) => (
  <svg width={s} height={s} viewBox="0 0 10 10">
    <path d="M1 1l8 8M9 1l-8 8" stroke={c} strokeWidth={w} />
  </svg>
);
const Dash = ({ c }: { c: string }) => (
  <svg width="12" height="3"><rect width="12" height="2" y=".5" fill={c} /></svg>
);

/* ---------- ribbon ---------- */

const Ribbon = styled.div`
  flex: none;
  height: 93px;
  padding-top: 2px;
  display: flex;
  align-items: stretch;
`;
const DockTabs = styled.div`
  width: 9px;
  display: flex;
  flex-direction: column;
  align-items: flex-start;
  padding: 64px 0 0 1px;
  border-left: 1px solid #c9c9c9;
`;
const DockTab = styled.i<{ $c: string; $b: string }>`
  width: 6px;
  height: 7px;
  background: ${(p) => p.$c};
  border: 1px solid ${(p) => p.$b};
  &:last-child { margin-top: 3px; height: 9px; }
`;
const Group = styled.section<{ $w: number; $gap?: number }>`
  flex: none;
  width: ${(p) => p.$w}px;
  margin-right: ${(p) => p.$gap ?? 3}px;
  background: #e3e9ef;
  border: 1px solid #d3d6d9;
  border-bottom: 0;
  border-radius: 3px 3px 0 0;
  display: flex;
`;
const GripBox = styled.div<{ $w?: number }>`
  flex: none;
  width: ${(p) => p.$w ?? 14}px;
  height: 20px;
  padding: 2px 0 0 3px;
  display: flex;
  gap: 2px;
`;
const GripDots = styled.i`
  flex: none;
  width: 3px;
  height: 18px;
  background: repeating-linear-gradient(#a3b8c8 0 3px, transparent 3px 5px);
`;
const Grip = ({ w }: { w?: number }) => (
  <GripBox $w={w}><GripDots /><GripDots /></GripBox>
);
const Sep = styled.i<{ $l?: number }>`
  flex: none;
  width: 1px;
  height: 88px;
  margin: 1px 0 0 ${(p) => p.$l ?? 0}px;
  background: #cdd3d9;
`;
const ToolCell = styled.div<{ $w: number }>`
  flex: none;
  width: ${(p) => p.$w}px;
  display: flex;
  flex-direction: column;
  align-items: center;
  ${Caret} { margin: auto 0 6px; }
`;
const IconArea = styled.div`
  flex: none;
  height: 43px;
  padding-top: 3px;
  display: flex;
  align-items: center;
`;
const ToolLabel = styled.div`
  display: flex;
  flex-direction: column;
  align-items: center;
  line-height: 18px;
  color: #2b2b2b;
`;
const Stack = styled.div<{ $w: number; $rows?: string }>`
  flex: none;
  width: ${(p) => p.$w}px;
  display: grid;
  grid-template-rows: ${(p) => p.$rows ?? "26px 32px 28px"};
  justify-items: center;
  align-items: center;
  align-content: start;
`;
const Overflow = styled.div`
  align-self: flex-end;
  margin-left: auto;
  padding: 0 2px 7px 0;
`;
const Chevrons = () => (
  <svg width="8" height="8" viewBox="0 0 8 8" fill="none" stroke="#333" strokeWidth="1.300">
    <path d="M1 .5l3 2.500 3-2.500M1 4.500l3 2.500 3-2.500" />
  </svg>
);

type ToolProps = { icon: string; w: number; lines: Array<[string, number]>; menu?: boolean };
const Tool = ({ icon, w, lines, menu }: ToolProps) => (
  <ToolCell $w={w}>
    <IconArea><Icon n={icon} /></IconArea>
    <ToolLabel>
      {lines.map(([t, lw]) => <Text key={t} t={t} w={lw} />)}
    </ToolLabel>
    {menu && <Caret />}
  </ToolCell>
);

const Palette = styled.div`
  width: 73px;
  padding-top: 6px;
`;
const Swatches = styled.div`
  display: grid;
  grid-template-columns: repeat(4, 16px);
  grid-auto-rows: 16px;
  gap: 2px;
`;
const Swatch = styled.i<{ $c: string }>`
  background: ${(p) => p.$c};
`;
const PaletteRule = styled.i`
  display: block;
  width: 70px;
  height: 2px;
  margin: 6px 0;
  background: #d3d6d8;
`;
const ColorCol = styled.div`
  width: 27px;
  padding-top: 5px;
  display: flex;
  flex-direction: column;
  gap: 2px;
`;
const Current = styled.i`
  width: 23px;
  height: 23px;
  background: #0000f5;
`;
const Wheel = styled.div`
  width: 23px;
  height: 19px;
  margin-bottom: 2px;
  padding-top: 2px;
  background: conic-gradient(#e9ea5c, #8ddc7c 50deg, #4fb0e6 90deg, #7a78dd 130deg, #b056c4 165deg, #e0394a 200deg, #e8535c 240deg, #f6b7b0 280deg, #fdeedd 310deg, #f6ee9c 340deg, #e9ea5c);
  display: flex;
  align-items: center;
  justify-content: center;
`;
const McdButtons = styled.div`
  width: 20px;
  margin-left: 16px;
  padding-top: 3px;
  display: flex;
  flex-direction: column;
  align-items: center;
  gap: 8px;
`;
const McdMinimize = styled.div`
  padding-top: 6px;
`;

/* ---------- viewport ---------- */

const Workspace = styled.main`
  flex: 1;
  min-height: 0;
  padding: 6px 5px 0 5px;
  background: #fafafa;
  border-left: 1px solid #d5d5d5;
`;
const Viewport = styled.div`
  height: 871px;
  margin-left: -1px;
  background: #e3e3e3;
  border-top: 2px solid #6c6c6c;
  border-left: 2px solid #777;
  border-right: 1px solid #fff;
  position: relative;
`;
const FloatRow = styled.div`
  display: flex;
  padding: 11px 0 0 322px;
`;
const FloatBar = styled.div<{ $w: number; $l?: number }>`
  flex: none;
  width: ${(p) => p.$w}px;
  height: 31px;
  margin-left: ${(p) => p.$l ?? 0}px;
  padding: 0 3px;
  background: #e3e9ef;
  border: 1px solid #d4d9dc;
  border-radius: 3px;
  display: flex;
  align-items: center;
`;
const FloatButton = styled.div<{ $w?: number; $on?: boolean }>`
  flex: none;
  width: ${(p) => p.$w ?? 24}px;
  height: 22px;
  display: flex;
  align-items: center;
  justify-content: center;
  ${(p) => p.$on && css`background: #fcc98a; border: 1px solid #e79a56;`}
`;
const FilterBar = styled(FloatBar)`
  gap: 2px;
`;
const FloatSep = styled.i`
  flex: none;
  width: 1px;
  height: 22px;
  background: #aab0b5;
`;
const DropPair = styled(FloatButton)`
  gap: 3px;
`;
const Ucs = styled.svg`
  position: absolute;
  left: 935px;
  top: 336px;
`;
const Callout = styled.div`
  position: absolute;
  left: 279px;
  top: 120px;
  width: 847px;
  height: 81px;
  border: 5px solid #ea1f27;
`;

/* ---------- feature panel ---------- */

const FeaturePanel = styled.aside`
  position: absolute;
  left: 11px;
  top: 137px;
  width: 357px;
  height: 861px;
  background: #f0f0f0;
  border-top: 1px solid #555;
  box-shadow: 2px 3px 14px rgba(0, 0, 0, 0.42);
  display: flex;
  flex-direction: column;
`;
const PanelHead = styled.div`
  flex: none;
  height: 37px;
  padding: 0 1px 0 9px;
  background: #fff;
  display: flex;
  justify-content: space-between;
  align-items: flex-start;
  line-height: 36px;
`;
const CloseButton = styled.div`
  width: 25px;
  height: 25px;
  margin-top: 8px;
  background: #c84f52;
  display: flex;
  align-items: center;
  justify-content: center;
`;
const PanelTools = styled.div`
  flex: none;
  height: 28px;
  padding-left: 2px;
  display: flex;
`;
const PanelSearch = styled.div`
  width: 219px;
  height: 26px;
  padding: 0 5px 0 6px;
  background: #fff;
  border: 2px solid #7a7a7a;
  display: flex;
  align-items: center;
  justify-content: space-between;
  color: #777;
  line-height: 20px;
  & > span { margin-top: -3px; }
`;
const PanelIcon = styled.div<{ $w: number }>`
  width: ${(p) => p.$w}px;
  height: 26px;
  display: flex;
  align-items: center;
  justify-content: center;
`;
const Tree = styled.div`
  flex: 1;
  margin: 0 2px 0 0;
  padding: 3px 2px 0 4px;
  background: #fff;
  border: 1px solid #d9d9d9;
  border-left: 1px solid #eee;
`;
const TreeHead = styled.div`
  height: 23px;
  padding-left: 7px;
  background: #efefef;
  border-right: 1px solid #a0a0a0;
  border-bottom: 1px solid #a0a0a0;
  line-height: 19px;
`;
const TreeRow = styled.div`
  height: 24px;
  padding-left: 18px;
  display: flex;
  align-items: center;
  line-height: 22px;
`;
const Twig = styled.i`
  width: 9px;
  height: 1px;
  margin-right: 11px;
  background: #b5b5b5;
`;
const ItemIcon = styled.span`
  width: 22px;
`;
const Tabs = styled.div`
  flex: none;
  height: 27px;
  display: flex;
  align-items: flex-start;
`;
const Tab = styled.div<{ $w: number; $active?: boolean }>`
  width: ${(p) => p.$w}px;
  height: ${(p) => (p.$active ? 28 : 26)}px;
  margin-top: ${(p) => (p.$active ? -1 : 0)}px;
  padding: 0 0 ${(p) => (p.$active ? 3 : 2)}px 2px;
  background: ${(p) => (p.$active ? "#fff" : "#f0f0f0")};
  border-right: 1px solid #d6d6d6;
  border-bottom: ${(p) => (p.$active ? "0" : "1px solid #d6d6d6")};
  display: flex;
  align-items: center;
  justify-content: center;
  line-height: 20px;
`;

/* ---------- status bar ---------- */

const StatusBar = styled.footer`
  flex: none;
  height: 26px;
  padding-left: 5px;
  background: #f0f0f0;
  display: flex;
  gap: 4px;
  line-height: 19px;
`;
const StatusText = styled.div`
  flex: none;
  width: 1049px;
  padding-top: 4px;
`;
const StatusBox = styled.div<{ $w: number }>`
  flex: none;
  width: ${(p) => p.$w}px;
  height: 22px;
  margin-top: 4px;
  padding-left: 2px;
  border: 1px solid #a0a0a0;
  border-right-color: #fff;
  border-bottom-color: #fff;
`;

const DropButton = ({ n, w = 37 }: { n: string; w?: number }) => (
  <DropPair $w={w}>
    <Icon n={n} />
    <Caret />
  </DropPair>
);

export default function App() {
  return (
    <Window>
      <GlobalStyle />
      <Defs />
      <TitleBar>
        <LogoSlot><Icon n="logo" /></LogoSlot>
        <QuickBar>
          {quick.map((q, i) =>
            q === "|" ? <QuickSep key={i} /> : q === "v" ? (
              <QuickSlot key={i} $w={10}><Caret /></QuickSlot>
            ) : (
              <QuickSlot key={i} $w={q[1]}><Icon n={q[0]} /></QuickSlot>
            )
          )}
        </QuickBar>
        <Menu>
          {menus.map(([t, w, tw]) => (
            <MenuItem key={t} $w={w}><Text t={t} w={tw} size={15} /></MenuItem>
          ))}
        </Menu>
        <DocTitle><Text t="ﾊﾟｰﾂ0" w={39} size={14} bold /></DocTitle>
        <SearchBox>
          <Text t="検索" w={29} size={14.5} italic />
          <svg width="17" height="17" viewBox="0 0 17 17" fill="none" stroke="#222">
            <circle cx="7" cy="7" r="5.5" strokeWidth="2" />
            <path d="M11 11l5 5" strokeWidth="2.600" />
          </svg>
        </SearchBox>
        <WindowButtons>
          <Dash c="#fff" />
          <Restore c="#fff" bg="#839fb5" />
          <Cross s={12} c="#fff" />
        </WindowButtons>
      </TitleBar>

      <Ribbon>
        <DockTabs>
          <DockTab $c="#f5cf9a" $b="#c9a87a" />
          <DockTab $c="#f5cf9a" $b="#c9a87a" />
          <DockTab $c="#fff" $b="#8fa9c0" />
        </DockTabs>
        <Group $w={515} $gap={4}>
          <Grip />
          <Tool icon="extrude" w={42} lines={[["押出し", 38]]} />
          <Tool icon="fillet" w={48} lines={[["ﾌｨﾚｯﾄ", 34]]} menu />
          <Tool icon="chamfer" w={42} lines={[["面取り", 38]]} />
          <Tool icon="draft" w={46} lines={[["ﾃｰﾊﾟ", 27]]} menu />
          <Sep $l={1} />
          <Tool icon="removeExtend" w={72} lines={[["削除と延長", 66]]} />
          <Tool icon="direct" w={72} lines={[["ﾀﾞｲﾚｸﾄﾓﾃﾞ", 61], ["ﾘﾝｸﾞ", 26]]} />
          <Tool icon="filletSize" w={80} lines={[["ﾌｨﾚｯﾄｻｲｽﾞ変", 78], ["更", 14]]} />
          <Sep $l={4} />
          <Stack $w={27}><Icon n="cylCut" /><Icon n="holeCut" /><Icon n="pocket" /></Stack>
          <Sep />
          <Tool icon="cutOff" w={54} lines={[["切り取り", 48]]} menu />
        </Group>
        <Group $w={497}>
          <Grip w={15} />
          <Tool icon="sweep" w={40} lines={[["掃引", 27]]} />
          <Tool icon="region" w={52} lines={[["領域", 28]]} />
          <Tool icon="blend" w={44} lines={[["ﾌﾞﾚﾝﾄﾞ", 42]]} />
          <Tool icon="expand" w={50} lines={[["拡張", 28]]} />
          <Tool icon="faceTrim" w={46} lines={[["面ﾄﾘﾑ", 35]]} />
          <Tool icon="faceSplit" w={48} lines={[["面分割", 41]]} />
          <Sep />
          <Tool icon="join" w={48} lines={[["接合", 28]]} />
          <Tool icon="unjoin" w={60} lines={[["接合解除", 56]]} />
          <Sep $l={3} />
          <Tool icon="sketchFix" w={78} lines={[["ｽｹｯﾁｬで修正", 74]]} menu />
        </Group>
        <Group $w={50}>
          <Grip w={12} />
          <Stack $w={26}><Icon n="sketch" /><Icon n="profile" /></Stack>
        </Group>
        <Group $w={259}>
          <Grip w={10} />
          <Tool icon="plane" w={66} lines={[["平面 平行", 60]]} menu />
          <Tool icon="ucsCopy" w={78} lines={[["座標系 ｺﾋﾟｰ", 75]]} menu />
          <Sep />
          <Tool icon="ucsActive" w={90} lines={[["座標系有効化", 83]]} />
        </Group>
        <Group $w={151}>
          <Grip w={17} />
          <Stack $w={36} $rows="46px 42px"><Icon n="dimension" /><Icon n="textA" /></Stack>
          <Stack $w={34}><Icon n="note1" /><Icon n="note2" /><Icon n="note3" /></Stack>
          <Stack $w={22}><Icon n="rough1" /><Icon n="rough2" /><Icon n="tolBox" /></Stack>
          <Sep $l={2} />
          <Stack $w={28}><Icon n="dimDel" /><Icon n="dimRot" /><Icon n="textWin" /></Stack>
        </Group>
        <Group $w={70}>
          <Grip w={15} />
          <Stack $w={40} $rows="46px 42px"><Icon n="cycle" /><Icon n="history" /></Stack>
        </Group>
        <Group $w={70}>
          <Grip w={15} />
          <Tool icon="measure" w={41} lines={[["計測", 27]]} />
        </Group>
        <Group $w={72}>
          <Grip w={15} />
          <Stack $w={40} $rows="47px 42px"><Icon n="zoomWin" /><Icon n="zoomPart" /></Stack>
          <Overflow><Chevrons /></Overflow>
        </Group>
        <Group $w={156}>
          <Grip w={14} />
          <Palette>
            <Swatches>
              {["#f00", "#ff0", "#00f", "#0f0", "#0ff", "#f0f", "#fff", "#000"].map((c) => <Swatch key={c} $c={c} />)}
            </Swatches>
            <PaletteRule />
            <Swatches>
              {["#f0f0f0", "#fcc8cc", "#fce5c4", "#fdfccb", "#dcefd2", "#cefde2", "#adeefa", "#b4cdfd"].map((c) => <Swatch key={c} $c={c} />)}
            </Swatches>
          </Palette>
          <ColorCol>
            <Current />
            <Wheel><Caret /></Wheel>
            <Icon n="dropper" />
          </ColorCol>
          <Sep />
          <Stack $w={28}><Icon n="thickness" /><Icon n="dashes" /><Icon n="brush" /></Stack>
          <Overflow><Chevrons /></Overflow>
        </Group>
        <McdButtons>
          <Cross s={13} c="#7696ba" w={1.8} />
          <Restore c="#7696ba" bg="#f0f0f0" />
          <McdMinimize><Dash c="#7696ba" /></McdMinimize>
        </McdButtons>
      </Ribbon>

      <Workspace>
        <Viewport>
          <FloatRow>
            <FloatBar $w={155}>
              <DropButton n="boxSelect" w={40} />
              <DropButton n="pickFilter" />
              <DropButton n="addSelect" w={36} />
              <DropButton n="boxSelect" w={37} />
            </FloatBar>
            <FloatBar $w={237} $l={39}>
              <FloatButton $w={26}><Icon n="bulbOff" /></FloatButton>
              <FloatButton $w={26}><Icon n="bulbOn" /></FloatButton>
              <FloatButton $w={25}><Icon n="swap" /></FloatButton>
              <FloatButton $w={28}><Icon n="ghostBulb" /></FloatButton>
              <FloatButton $w={24}><Icon n="left" /></FloatButton>
              <FloatButton $w={29}><Icon n="right" /></FloatButton>
              <FloatSep />
              <DropButton n="cube" w={36} />
              <DropButton n="wireCube" w={33} />
            </FloatBar>
            <FilterBar $w={307} $l={38}>
              <FloatButton><Icon n="loop" /></FloatButton>
              <FloatButton><Icon n="fHand" /></FloatButton>
              <FloatSep />
              <FloatButton><Icon n="fAxes" /></FloatButton>
              <FloatSep />
              <FloatButton><Icon n="fObjects" /></FloatButton>
              <FloatButton $on><Icon n="fFace" /></FloatButton>
              <FloatButton $on><Icon n="fProfile" /></FloatButton>
              <FloatButton $on><Icon n="fCurve" /></FloatButton>
              <FloatButton $on><Icon n="fPlane" /></FloatButton>
              <FloatButton><Icon n="fPart" /></FloatButton>
              <FloatButton $on><Icon n="fDim" /></FloatButton>
              <FloatSep />
              <FloatButton><Icon n="fPoint" /></FloatButton>
              <Caret $side />
            </FilterBar>
          </FloatRow>
          <Ucs width="130" height="140" viewBox="942 470 130 140" fill="none" stroke="#e01010" strokeWidth="1">
            <path d="M960.500 513.500l-6 25h11.500zM958.500 538.500v31M961.500 538.500v27M990.500 564.500v11l26-6zM963 568.500h27.500M963 571h27.500" />
            <circle cx="960.500" cy="569.500" r="2.500" />
            <path d="M956 569.500h9" strokeWidth="2" />
            <g fontFamily="Liberation Sans" fontSize="23" fill="#e01010" strokeWidth=".2">
              <text x="953" y="495.500">Y</text>
              <text x="953" y="569.500">Z</text>
              <text x="1027" y="569.500">X</text>
              <text x="960.500" y="596.500" textLength="93">UCS10_1</text>
            </g>
          </Ucs>
        </Viewport>
      </Workspace>

      <StatusBar>
        <StatusText><Text t="準備OK" w={49} size={14.5} /></StatusText>
        <StatusBox $w={271} />
        <StatusBox $w={101} />
        <StatusBox $w={101} />
        <StatusBox $w={101} />
        <StatusBox $w={201}><Text t="ﾊﾟｰﾂ0" w={41} size={14.5} /></StatusBox>
        <StatusBox $w={67}><Text t="単位:mm" w={54} size={14} /></StatusBox>
      </StatusBar>

      <FeaturePanel>
        <PanelHead>
          <Text t="ﾌｨｰﾁｬ" w={39} size={14} />
          <CloseButton><Cross s={8} c="#fff" /></CloseButton>
        </PanelHead>
        <PanelTools>
          <PanelSearch>
            <Text t="検索" w={30} size={14.5} italic />
            <Cross s={9} c="#555" />
          </PanelSearch>
          <PanelIcon $w={24}><Icon n="pArrow" /></PanelIcon>
          <PanelIcon $w={32}><Icon n="pSpring" /></PanelIcon>
          <PanelIcon $w={24}><Icon n="pBang" /></PanelIcon>
          <PanelIcon $w={28}><Icon n="pS" /></PanelIcon>
          <PanelIcon $w={24}><Icon n="pSort" /></PanelIcon>
        </PanelTools>
        <Tree>
          <TreeHead><Text t="名前" w={29} size={14.5} /></TreeHead>
          <TreeRow>
            <Twig />
            <ItemIcon><Icon n="objects" /></ItemIcon>
            <Text t="ｵﾌﾞｼﾞｪｸﾄ" w={65} size={14.5} />
          </TreeRow>
        </Tree>
        <Tabs>
          <Tab $w={63} $active><Text t="ﾌｨｰﾁｬ" w={40} /></Tab>
          <Tab $w={58}><Text t="ｾｯﾄ" w={24} /></Tab>
          <Tab $w={76}><Text t="ﾓﾃﾞﾙﾋﾞｭｰ" w={64} /></Tab>
        </Tabs>
      </FeaturePanel>

      <Callout />
    </Window>
  );
}
